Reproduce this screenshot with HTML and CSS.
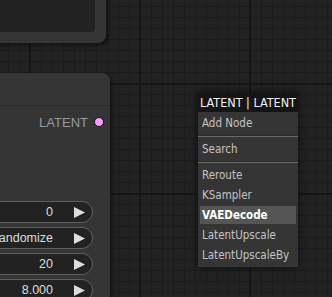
FILE: index.html
```html
<!DOCTYPE html>
<html lang="en">
<head>
    <meta charset="UTF-8">
    <title>Graph</title>
    <link rel="stylesheet" href="styles.css">
</head>
<body>
    <div class="canvas">
        <div class="node node-prompt">
            <div class="prompt-text"></div>
        </div>

        <div class="node node-sampler">
            <div class="node-title"></div>
            <div class="slots">
                <div class="slot-out">LATENT <span class="dot"></span></div>
            </div>
            <div class="widgets">
                <div class="widget"><span class="value">0</span><svg class="arrow" viewBox="0 0 11 11"><polygon points="0,0 11,5.5 0,11"/></svg></div>
                <div class="widget"><span class="value">randomize</span><svg class="arrow" viewBox="0 0 11 11"><polygon points="0,0 11,5.5 0,11"/></svg></div>
                <div class="widget"><span class="value">20</span><svg class="arrow" viewBox="0 0 11 11"><polygon points="0,0 11,5.5 0,11"/></svg></div>
                <div class="widget"><span class="value">8.000</span><svg class="arrow" viewBox="0 0 11 11"><polygon points="0,0 11,5.5 0,11"/></svg></div>
            </div>
        </div>

        <div class="menu">
            <div class="menu-title">LATENT | LATENT</div>
            <div class="menu-entry">Add Node</div>
            <div class="menu-sep"></div>
            <div class="menu-entry">Search</div>
            <div class="menu-sep"></div>
            <div class="menu-entry">Reroute</div>
            <div class="menu-entry">KSampler</div>
            <div class="menu-entry active">VAEDecode</div>
            <div class="menu-entry">LatentUpscale</div>
            <div class="menu-entry">LatentUpscaleBy</div>
        </div>
    </div>
</body>
</html>
```

FILE: styles.css
```css
body {
    margin: 0;
    background-color: #222;
    font-family: "Liberation Sans", Arial, sans-serif;
}
.canvas {
    position: relative;
    width: 332px;
    height: 297px;
    overflow: hidden;
    background-color: #222;
    background-image:
        linear-gradient(90deg, #161616 2px, transparent 2px),
        linear-gradient(#161616 2px, transparent 2px),
        linear-gradient(90deg, #1b1b1b 1px, transparent 1px),
        linear-gradient(#1b1b1b 1px, transparent 1px);
    background-size: 110px 110px, 110px 110px, 11px 11px, 11px 11px;
    background-position: 29px 0, 0 83px, 8px 0, 0 6px;
}
.node {
    position: absolute;
    background-color: #353535;
    border-radius: 8px;
    box-shadow: 2px 2px 4px rgba(0, 0, 0, 0.5);
}
.node-prompt {
    left: -30px;
    top: -30px;
    width: 136px;
    height: 73px;
    padding: 0 11px 11px 0;
    box-sizing: border-box;
}
.prompt-text {
    height: 100%;
    background-color: #222;
    border-radius: 4px;
}
.node-sampler {
    left: -70px;
    top: 73px;
    width: 180px;
    height: 260px;
}
.node-title {
    height: 32px;
    border-bottom: 1px solid #2e2e2e;
    background-color: #353535;
    border-radius: 8px 8px 0 0;
}
.slots {
    height: 95px;
    padding-top: 5px;
    box-sizing: border-box;
}
.slot-out {
    height: 22px;
    display: flex;
    justify-content: flex-end;
    align-items: center;
    gap: 6px;
    padding-right: 6px;
    color: #9a9a9a;
    font-size: 13px;
}
.dot {
    width: 8px;
    height: 8px;
    border-radius: 50%;
    background-color: #ff9cf9;
    border: 1px solid #111;
}
.widgets {
    display: flex;
    flex-direction: column;
    gap: 4px;
    padding: 0 17px 0 15px;
}
.widget {
    height: 22px;
    box-sizing: border-box;
    border: 1px solid #5e5e5e;
    border-radius: 11px;
    background-color: #222;
    display: flex;
    justify-content: flex-end;
    align-items: center;
    gap: 21px;
    padding-right: 7px;
    color: #ddd;
    font-size: 12.5px;
}
.arrow {
    width: 11px;
    height: 11px;
    fill: #ddd;
}
.menu {
    position: absolute;
    left: 198px;
    top: 93px;
    width: 100px;
    padding-bottom: 1px;
    background-color: #353535;
    box-shadow: 0 0 8px rgba(0, 0, 0, 0.6);
    font-family: "DejaVu Sans Condensed", "DejaVu Sans", sans-serif;
    font-stretch: condensed;
}
.menu-title {
    height: 19px;
    line-height: 19px;
    padding-left: 2px;
    background-color: #151515;
    color: #f2f2f2;
    font-size: 12.5px;
}
.menu-entry {
    height: 18px;
    line-height: 18px;
    margin: 2px;
    padding-left: 2px;
    color: #c4c4c4;
    font-size: 11.5px;
}
.menu-entry.active {
    background-color: #555;
    color: #fff;
    font-weight: bold;
}
.menu-sep {
    border-top: 1px solid #2a2a2a;
    border-bottom: 1px solid #6a6a6a;
    margin: 3px 0 3px 0;
}
```
